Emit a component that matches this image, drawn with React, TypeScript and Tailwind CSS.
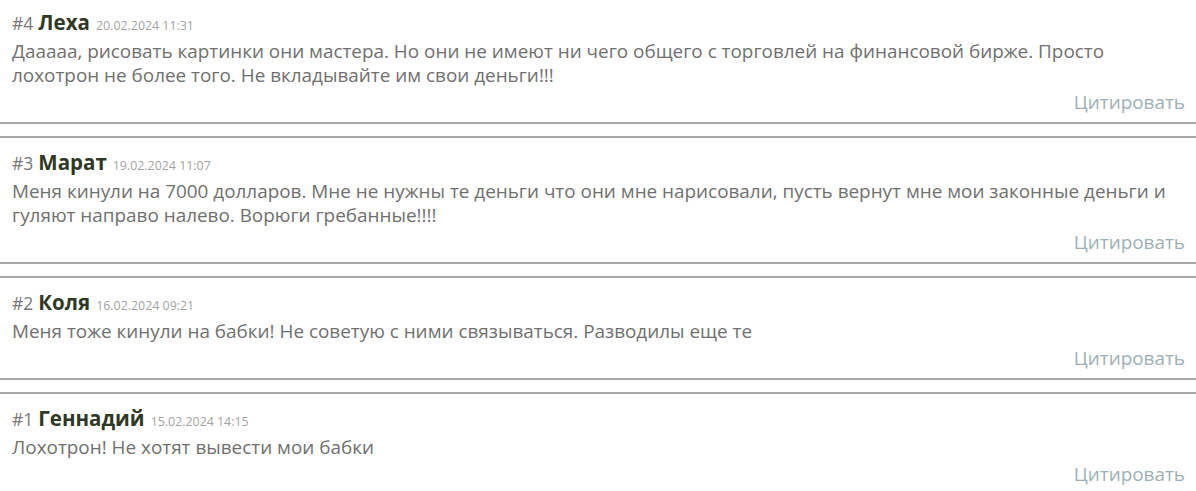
const comments = [
  {
    n: 4,
    name: "Леха",
    date: "20.02.2024 11:31",
    text: "Дааааа, рисовать картинки они мастера. Но они не имеют ни чего общего с торговлей на финансовой бирже. Просто лохотрон не более того. Не вкладывайте им свои деньги!!!",
  },
  {
    n: 3,
    name: "Марат",
    date: "19.02.2024 11:07",
    text: "Меня кинули на 7000 долларов. Мне не нужны те деньги что они мне нарисовали, пусть вернут мне мои законные деньги и гуляют направо налево. Ворюги гребанные!!!!",
  },
  {
    n: 2,
    name: "Коля",
    date: "16.02.2024 09:21",
    text: "Меня тоже кинули на бабки! Не советую с ними связываться. Разводилы еще те",
  },
  {
    n: 1,
    name: "Геннадий",
    date: "15.02.2024 14:15",
    text: "Лохотрон! Не хотят вывести мои бабки",
  },
]

export default function App() {
  return (
    <div
      className="w-[1196px] h-[491px] overflow-hidden bg-white"
      style={{ fontFamily: '"Open Sans", "Noto Sans", sans-serif' }}
    >
      {comments.map((c, i) => (
        <div key={c.n}>
          {i > 0 && (
            <div className="h-[16px] border-t-2 border-b-2 border-[#aaaaaa]"></div>
          )}
          <div className={`${i === 0 ? "pt-[10px]" : "pt-[12px]"} pb-[8px]`}>
            <div className="px-3 h-6 flex items-baseline gap-[6px] leading-6">
              <span className="text-[17.5px] text-[#777777]">#{c.n}</span>
              <span className="text-[20.5px] font-bold text-[#303826] -ml-[1px]">{c.name}</span>
              <span className="text-[12.4px] text-[#a3a3a3]">{c.date}</span>
            </div>
            <p className="px-3 mt-[5px] text-[18.9px] leading-6 text-[#707070] pr-4">{c.text}</p>
            <div className="mt-[3px] pl-3 pr-[11px] text-right text-[18.9px] leading-6 text-[#9eb0b7]">
              Цитировать
            </div>
          </div>
        </div>
      ))}
    </div>
  )
}
